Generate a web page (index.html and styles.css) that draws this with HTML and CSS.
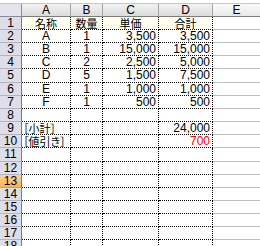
FILE: index.html
```html
<!DOCTYPE html>
<html lang="ja">
<head>
<meta charset="utf-8">
<link rel="stylesheet" href="styles.css">
</head>
<body>
<div class="sheet">
  <div class="corner"></div>
  <div class="ch">A</div><div class="ch">B</div><div class="ch">C</div><div class="ch">D</div><div class="ch ce">E</div>

  <div class="rh">1</div><div class="c hd ctr jp">名称</div><div class="c hd ctr jp">数量</div><div class="c hd ctr jp">単価</div><div class="c hd ctr jp">合計</div><div class="e"></div>
  <div class="rh">2</div><div class="c ctr">A</div><div class="c ctr">1</div><div class="c num">3,500</div><div class="c num">3,500</div><div class="e"></div>
  <div class="rh">3</div><div class="c ctr">B</div><div class="c ctr">1</div><div class="c num">15,000</div><div class="c num">15,000</div><div class="e"></div>
  <div class="rh">4</div><div class="c ctr">C</div><div class="c ctr">2</div><div class="c num">2,500</div><div class="c num">5,000</div><div class="e"></div>
  <div class="rh">5</div><div class="c ctr">D</div><div class="c ctr">5</div><div class="c num">1,500</div><div class="c num">7,500</div><div class="e"></div>
  <div class="rh">6</div><div class="c ctr">E</div><div class="c ctr">1</div><div class="c num">1,000</div><div class="c num">1,000</div><div class="e"></div>
  <div class="rh">7</div><div class="c ctr">F</div><div class="c ctr">1</div><div class="c num">500</div><div class="c num">500</div><div class="e"></div>
  <div class="rh">8</div><div class="c"></div><div class="c"></div><div class="c"></div><div class="c"></div><div class="e"></div>
  <div class="rh">9</div><div class="c lbl jp">［小計］</div><div class="c"></div><div class="c"></div><div class="c num">24,000</div><div class="e"></div>
  <div class="rh">10</div><div class="c lbl jp">［値引き］</div><div class="c"></div><div class="c"></div><div class="c num red">700</div><div class="e"></div>
  <div class="rh">11</div><div class="c"></div><div class="c"></div><div class="c"></div><div class="c"></div><div class="e"></div>
  <div class="rh">12</div><div class="c"></div><div class="c"></div><div class="c"></div><div class="c"></div><div class="e"></div>
  <div class="rh sel">13</div><div class="c"></div><div class="c"></div><div class="c"></div><div class="c"></div><div class="e"></div>
  <div class="rh">14</div><div class="c"></div><div class="c"></div><div class="c"></div><div class="c"></div><div class="e"></div>
  <div class="rh">15</div><div class="c"></div><div class="c"></div><div class="c"></div><div class="c"></div><div class="e"></div>
  <div class="rh">16</div><div class="c"></div><div class="c"></div><div class="c"></div><div class="c"></div><div class="e"></div>
  <div class="rh">17</div><div class="c"></div><div class="c"></div><div class="c"></div><div class="c"></div><div class="e"></div>
  <div class="rh">18</div><div class="c"></div><div class="c"></div><div class="c"></div><div class="c"></div><div class="e"></div>
</div>
</body>
</html>
```

FILE: styles.css
```css
html, body {
  margin: 0;
  padding: 0;
  background: #ffffff;
  overflow: hidden;
}

body {
  padding-top: 3px;
  font-family: "Liberation Sans", "Noto Sans CJK JP", sans-serif;
  font-size: 12px;
  color: #000;
}

.sheet {
  display: grid;
  grid-template-columns: 22px 49px 32px 56px 54px 47px;
  grid-template-rows: 13px 13px 13px 13px 13px 14px 13px 13px 13px 13px 13px 14px 13px 13px 13px 13px 13px 13px 13px;
  width: 260px;
  border-top: 1px solid #c8c8c8;
}

.sheet > div {
  box-sizing: border-box;
  line-height: 12px;
  white-space: nowrap;
  overflow: visible;
}

.corner {
  background: #e4e4ea;
  border-right: 1px solid #8c8c96;
  border-bottom: 1px solid #8c8c96;
}

.ch {
  background: linear-gradient(#f2f2f2, #dcdcdc);
  border-right: 1px solid #a4a4a4;
  border-bottom: 1px solid #7c7c7c;
  text-align: center;
}

.ce {
  background: linear-gradient(#fafafa, #e8e8e8);
  border-right: none;
}

.rh {
  background: #dedee8;
  border-right: 1px solid #7c7c84;
  border-bottom: 1px solid #b4b4c0;
  text-align: center;
}

.rh.sel {
  background: linear-gradient(#fbd39a, #f6b25c);
  border-bottom-color: #d89a50;
}

.c {
  border-right: 1px dotted #000;
  border-bottom: 1px dotted #000;
  background: #fff;
  padding: 0 2px;
}

.jp {
  font-family: "Noto Sans CJK JP", sans-serif;
  font-size: 11px;
  font-feature-settings: "palt";
}

.hd {
  background: #fffff0;
}

.ctr {
  text-align: center;
}

.num {
  text-align: right;
}

.lbl {
  text-align: left;
  padding-left: 1px;
}

.red {
  color: #ff0000;
}

.e {
  border-bottom: 1px solid #c0c0c0;
  background: #fff;
}
```
